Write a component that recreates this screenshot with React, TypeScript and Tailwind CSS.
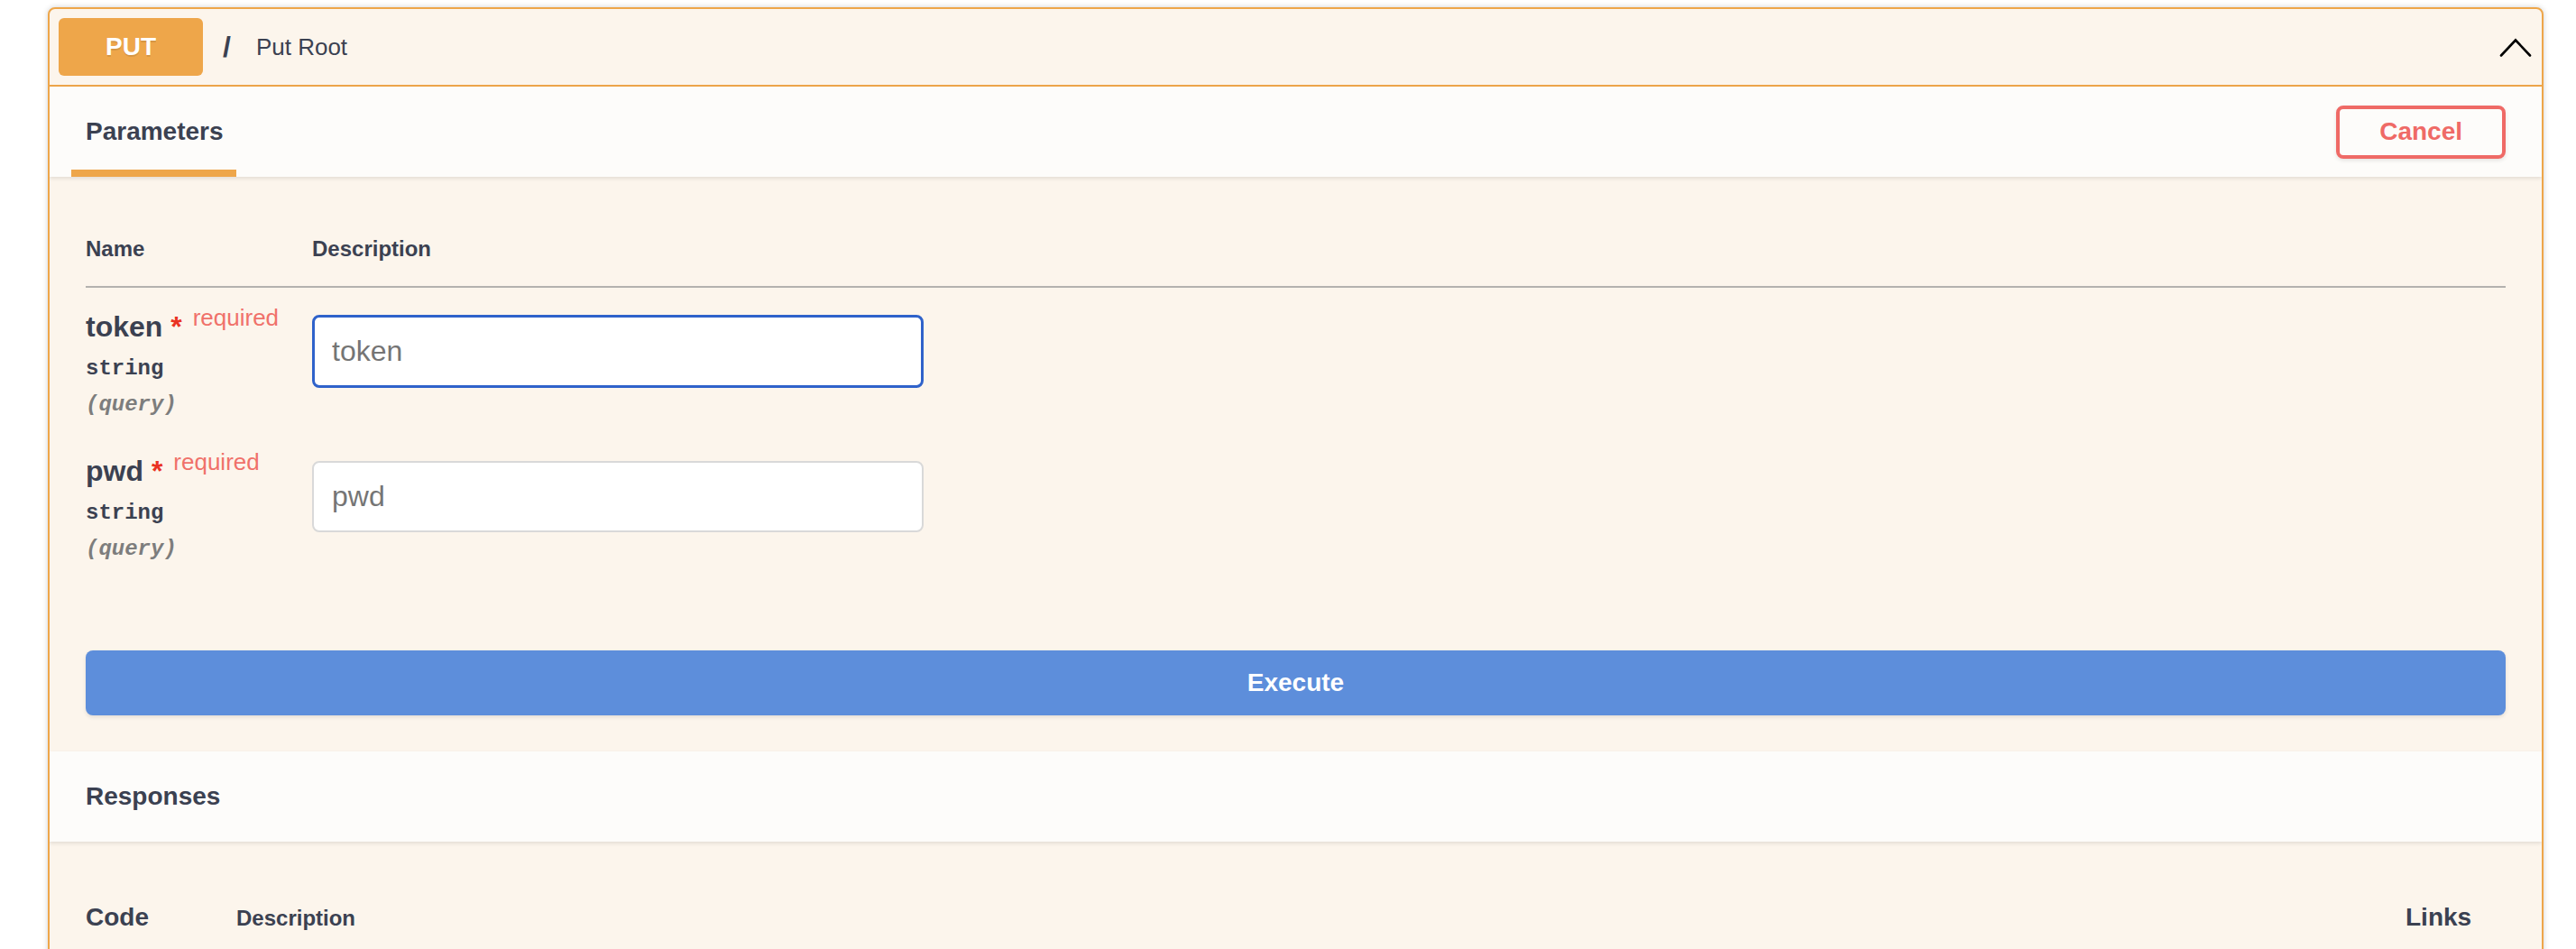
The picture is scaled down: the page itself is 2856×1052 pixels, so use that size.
import React from "react";

function Chevron() {
  return (
    <svg width="40" height="40" viewBox="0 0 40 40" className="shrink-0">
      <polyline points="5,29.5 21,12.5 37,29.5" fill="none" stroke="#000" strokeWidth="2.6" strokeLinecap="round" strokeLinejoin="miter" />
    </svg>
  );
}

function ParamName({ name, top }: { name: string; top: string }) {
  return (
    <div className={`w-[251px] shrink-0 ${top}`}>
      <div className="text-[32px] font-bold leading-[37px] whitespace-nowrap">
        {name}
        <span className="text-[#ea3323]">&nbsp;*</span>
        <span className="pl-[12px] align-[12px] text-[26px] font-normal leading-[16px] text-[#f0716a]">required</span>
      </div>
      <div className="mt-[8px] font-['Liberation_Mono',monospace] text-[24px] font-bold leading-[40px]">string</div>
      <div className="font-['Liberation_Mono',monospace] text-[24px] font-bold italic leading-[40px] text-[#7d7d7d]">(query)</div>
    </div>
  );
}

export default function App() {
  return (
    <div className="min-h-screen bg-white pl-[53px] pr-[36px] pt-[8px] font-['Liberation_Sans',Arial,sans-serif] text-[#3b4151]">
      <div className="overflow-hidden rounded-[8px] border-2 border-[#eea64a] bg-[#fcf5ec] shadow-[0_0_6px_rgba(0,0,0,0.19)]">
        {/* summary */}
        <div className="flex items-center border-b-2 border-[#eea64a] p-[10px]">
          <span className="flex h-[64px] w-[160px] items-center justify-center rounded-[6px] bg-[#eea64a] text-[28px] font-bold text-white [text-shadow:0_2px_0_rgba(0,0,0,0.1)]">
            PUT
          </span>
          <span className="pl-[22px] pr-[28px] text-[32px] font-bold leading-[40px]">/</span>
          <span className="flex-1 text-[26px] leading-[32px]">Put Root</span>
          <Chevron />
        </div>

        {/* tab header */}
        <div className="relative z-10 flex h-[100px] items-center justify-between bg-[#fdfcfa] px-[40px] shadow-[0_2px_4px_rgba(0,0,0,0.1)]">
          <div className="relative flex h-full items-center">
            <span className="text-[28px] font-bold">Parameters</span>
            <span className="absolute bottom-0 left-[-16px] h-[8px] w-[183px] bg-[#eea64a]" />
          </div>
          <button className="h-[59px] rounded-[8px] border-4 border-[#ef6a66] bg-transparent px-[44px] text-[28px] font-bold text-[#ef6a66] shadow-[0_2px_4px_rgba(0,0,0,0.1)]">
            Cancel
          </button>
        </div>

        {/* parameters */}
        <div className="px-[40px] pb-[40px] pt-[40px]">
          <div className="flex border-b-2 border-[#b4b2af] pb-[27px] pt-[26px] text-[24px] font-bold leading-[28px]">
            <div className="w-[251px] shrink-0">Name</div>
            <div>Description</div>
          </div>
          <div className="flex h-[162px]">
            <ParamName name="token" top="pt-[25px]" />
            <div className="pt-[30px]">
              <input
                readOnly
                placeholder="token"
                className="h-[81px] w-[678px] rounded-[8px] border-[3px] border-[#2f62ca] bg-white pl-[19px] text-[32px] outline-none placeholder:text-[#757575]"
              />
            </div>
          </div>
          <div className="flex h-[160px]">
            <ParamName name="pwd" top="pt-[23px]" />
            <div className="pt-[30px]">
              <input
                readOnly
                placeholder="pwd"
                className="h-[79px] w-[678px] rounded-[8px] border-2 border-[#d9d9d9] bg-white pl-[20px] text-[32px] outline-none placeholder:text-[#757575]"
              />
            </div>
          </div>
        </div>

        {/* execute */}
        <div className="p-[40px]">
          <button className="h-[72px] w-full rounded-[8px] bg-[#5d8edb] text-[28px] font-bold text-white shadow-[0_2px_4px_rgba(0,0,0,0.1)]">
            Execute
          </button>
        </div>

        {/* responses header */}
        <div className="relative z-10 flex h-[100px] items-center bg-[#fdfcfa] px-[40px] shadow-[0_2px_4px_rgba(0,0,0,0.1)]">
          <span className="text-[28px] font-bold">Responses</span>
        </div>

        {/* responses body */}
        <div className="px-[40px] pb-[80px] pt-[68px]">
          <div className="flex items-baseline font-bold">
            <div className="w-[167px] shrink-0 text-[28px] leading-[32px]">Code</div>
            <div className="flex-1 text-[24px] leading-[28px]">Description</div>
            <div className="w-[111px] shrink-0 text-[28px] leading-[32px]">Links</div>
          </div>
        </div>
      </div>
    </div>
  );
}
